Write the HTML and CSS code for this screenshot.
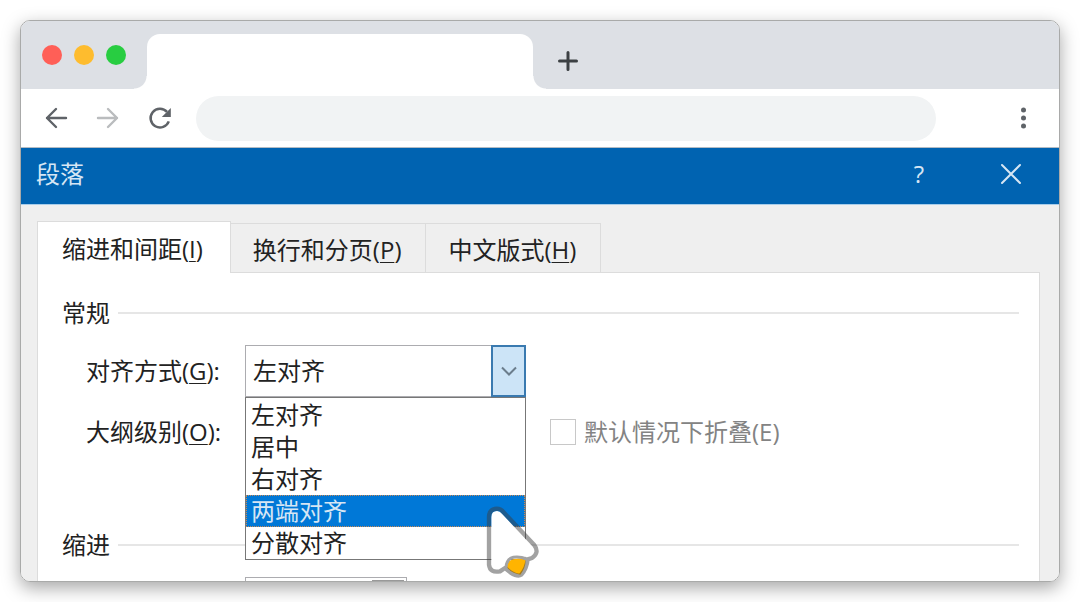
FILE: index.html
```html
<!DOCTYPE html>
<html lang="zh-CN">
<head>
    <meta charset="UTF-8">
    <meta name="viewport" content="width=device-width, initial-scale=1.0">
    <title>段落</title>
    <link rel="stylesheet" href="styles.css">
</head>
<body>

    <div class="window">

        <!-- Browser tabs -->
        <div class="tab-strip">
            <div class="lights">
                <span class="light red"></span>
                <span class="light yellow"></span>
                <span class="light green"></span>
            </div>
            <div class="browser-tab"></div>
            <button class="new-tab" type="button">
                <svg width="32" height="32" viewBox="0 0 32 32"><path d="M16 7.5v17M7.5 16h17" stroke="#3c4043" stroke-width="3" stroke-linecap="round"/></svg>
            </button>
        </div>

        <!-- Browser toolbar -->
        <div class="toolbar">
            <button type="button">
                <svg width="32" height="32" viewBox="0 0 32 32" fill="none" stroke="#5f6368" stroke-width="2.4" stroke-linecap="round" stroke-linejoin="round"><path d="M26 16H7M16 7L7 16l9 9"/></svg>
            </button>
            <button type="button">
                <svg width="32" height="32" viewBox="0 0 32 32" fill="none" stroke="#babcbe" stroke-width="2.4" stroke-linecap="round" stroke-linejoin="round"><path d="M6 16h19M16 7l9 9-9 9"/></svg>
            </button>
            <button type="button">
                <svg width="32" height="32" viewBox="0 0 32 32"><path d="M24.8 19.4A9.4 9.4 0 1 1 23 9.8" fill="none" stroke="#5f6368" stroke-width="2.5"/><path d="M26.8 6v9h-9z" fill="#5f6368"/></svg>
            </button>
            <input class="address" type="text">
            <button type="button">
                <svg width="32" height="32" viewBox="0 0 32 32" fill="#5f6368"><circle cx="16.5" cy="8" r="2.5"/><circle cx="16.5" cy="16" r="2.5"/><circle cx="16.5" cy="24" r="2.5"/></svg>
            </button>
        </div>

        <!-- Dialog title -->
        <div class="title-bar">
            <span class="title">段落</span>
            <button class="help" type="button">?</button>
            <button class="close" type="button">
                <svg width="32" height="32" viewBox="0 0 32 32"><path d="M7 7l18 18M25 7L7 25" stroke="#d6e6f4" stroke-width="2" stroke-linecap="round"/></svg>
            </button>
        </div>

        <!-- Dialog content -->
        <div class="dialog">
            <div class="tabs" role="tablist">
                <button class="tab active" type="button" role="tab">缩进和间距(<u>I</u>)</button>
                <button class="tab" type="button" role="tab">换行和分页(<u>P</u>)</button>
                <button class="tab" type="button" role="tab">中文版式(<u>H</u>)</button>
            </div>

            <div class="panel">
                <div class="heading">常规</div>

                <div class="row">
                    <label for="align">对齐方式(<u>G</u>):</label>
                    <div class="combo">
                        <select id="align">
                            <option>左对齐</option>
                        </select>
                        <span class="arrow">
                            <svg width="16" height="16" viewBox="0 0 16 16"><path d="M1 4.5l7 7 7-7" fill="none" stroke="#6b7d8c" stroke-width="2"/></svg>
                        </span>
                        <ul class="list" role="listbox">
                            <li role="option">左对齐</li>
                            <li role="option">居中</li>
                            <li role="option">右对齐</li>
                            <li class="selected" role="option">两端对齐</li>
                            <li role="option">分散对齐</li>
                        </ul>
                        <svg class="cursor" width="60" height="78" viewBox="372 312 180 234">
                            <path d="M394 352Q394 333 411 333Q420 333 426 341L518 440Q532 460 510 469L500 472Q470 460 448 475Q438 490 434 501L419 513Q396 516 394 494Z" fill="#fff"/>
                            <path d="M445 484Q470 470 497 480Q497 504 481 524Q452 520 440 500Z" fill="#ffb400"/>
                            <path d="M387 350Q388 327 411 326Q423 326 430 336L522 434Q540 458 516 474L503 478Q500 506 484 524Q474 532 452 518L435 504L420 514Q390 520 387 494Z" fill="none" stroke="#3c3c3c" stroke-opacity=".48" stroke-width="13" stroke-linejoin="round"/>
                            <path d="M438 502Q440 476 460 472Q480 469 500 477" fill="none" stroke="#a3a3a3" stroke-width="9"/>
                        </svg>
                    </div>
                </div>

                <div class="row">
                    <label for="outline">大纲级别(<u>O</u>):</label>
                    <div class="combo back">
                        <select id="outline"></select>
                    </div>
                    <label class="check" for="collapse">
                        <input id="collapse" type="checkbox" disabled>
                        默认情况下折叠(E)
                    </label>
                </div>

                <div class="heading indent">缩进</div>

                <div class="row">
                    <div class="spinner">
                        <input type="text">
                        <button type="button"></button>
                    </div>
                </div>
            </div>
        </div>
    </div>

</body>
</html>
```
FILE: styles.css
```css
* {
    box-sizing: border-box;
}

body {
    margin: 0;
    padding: 20px;
    background-color: #fff;
    color: #222;
    font-family: "Open Sans", "Noto Sans CJK SC", sans-serif;
    font-size: 24px;
    line-height: 32px;
}

button,
input,
select {
    margin: 0;
    padding: 0;
    border: none;
    border-radius: 0;
    background: none;
    color: inherit;
    font: inherit;
}

svg {
    display: block;
}

u {
    text-decoration-thickness: 1px;
    text-underline-offset: 3px;
}

.window {
    height: calc(100vh - 40px);
    overflow: hidden;
    border: 1px solid #a9aaa9;
    border-radius: 10px;
    box-shadow: 0 6px 18px rgba(0, 0, 0, 0.35);
}

/* Browser tabs */
.tab-strip {
    display: flex;
    align-items: center;
    height: 68px;
    background-color: #dde0e5;
}

.lights {
    display: flex;
    gap: 12px;
    width: 126px;
    padding-left: 21px;
}

.light {
    width: 20px;
    height: 20px;
    border-radius: 50%;
}

.red {
    background-color: #ff5f57;
}

.yellow {
    background-color: #febc2e;
}

.green {
    background-color: #28cd41;
}

.browser-tab {
    position: relative;
    align-self: flex-end;
    width: 386px;
    height: 55px;
    border-radius: 13px 13px 0 0;
    background-color: #fff;
}

.browser-tab::before,
.browser-tab::after {
    content: "";
    position: absolute;
    bottom: 0;
    width: 13px;
    height: 13px;
}

.browser-tab::before {
    right: 100%;
    background: radial-gradient(circle at 0 0, transparent 12px, #fff 13px);
}

.browser-tab::after {
    left: 100%;
    background: radial-gradient(circle at 100% 0, transparent 12px, #fff 13px);
}

.new-tab {
    margin: 12px 0 0 19px;
}

.lights,
.browser-tab {
    flex-shrink: 0;
}

/* Browser toolbar */
.toolbar {
    display: flex;
    align-items: center;
    gap: 20px;
    height: 59px;
    padding: 0 20px 0 19px;
    border-bottom: 1px solid #b4bcc4;
    background-color: #fff;
}

.address {
    flex: 1;
    min-width: 0;
    height: 45px;
    margin-right: 51px;
    padding: 0 22px;
    border-radius: 23px;
    background-color: #f1f3f4;
}

/* Dialog title */
.title-bar {
    display: flex;
    align-items: center;
    height: 57px;
    padding: 0 32px 4px 15px;
    border-bottom: 1px solid #a8cdea;
    background-color: #0063b1;
    color: #d6e6f4;
}

.title {
    flex: 1;
}

.help {
    width: 32px;
    margin-right: 60px;
}

/* Dialog tabs */
.dialog {
    min-height: 100%;
    padding: 16px 19px 0 16px;
    background-color: #efefef;
}

.tabs {
    display: flex;
    align-items: flex-end;
}

.tab {
    height: 49px;
    padding: 4px 24px 0 22px;
    border: 1px solid #dcdcdc;
    border-left: none;
    border-bottom: none;
}

.tab.active {
    position: relative;
    height: 52px;
    margin-bottom: -1px;
    padding: 2px 27px 0 24px;
    border-left: 1px solid #dcdcdc;
    background-color: #fff;
}

.panel {
    padding: 24px 20px 40px 24px;
    border: 1px solid #dcdcdc;
    background-color: #fff;
}

.heading {
    display: flex;
    align-items: center;
    gap: 8px;
    margin-bottom: 16px;
}

.heading::after {
    content: "";
    flex: 1;
    height: 2px;
    background-color: #e6e6e6;
}

.indent {
    margin-top: 71px;
}

.row {
    display: grid;
    grid-template-columns: 159px 281px 1fr;
    align-items: center;
    padding-left: 24px;
}

.row + .row {
    margin-top: 9px;
}

/* Drop-down */
.combo {
    position: relative;
    z-index: 1;
    height: 52px;
}

.combo.back {
    z-index: 0;
}

.combo select {
    width: 100%;
    height: 100%;
    padding-left: 7px;
    border: 1px solid #acacb0;
    background-color: #fff;
    appearance: none;
}

.arrow {
    position: absolute;
    top: 0;
    right: 0;
    display: flex;
    align-items: center;
    justify-content: center;
    width: 35px;
    height: 52px;
    border: 2px solid #3a7ab0;
    background-color: #cce4f7;
    pointer-events: none;
}

.list {
    position: absolute;
    top: 100%;
    left: 0;
    width: 100%;
    margin: 0;
    padding: 1px 0 0;
    border: 1px solid #777;
    background-color: #fff;
    list-style: none;
}

.list li {
    padding-left: 5px;
}

.list .selected {
    outline: 1px dotted #c98a55;
    outline-offset: -1px;
    background-color: #0078d7;
    color: #d6e6f4;
}

.cursor {
    position: absolute;
    top: 159px;
    left: 239px;
}

.check {
    display: flex;
    align-items: center;
    gap: 8px;
    padding-left: 24px;
    color: #838383;
}

.check input {
    width: 26px;
    height: 26px;
    border: 1px solid #c8c8c8;
    background-color: #fff;
    appearance: none;
}

.spinner {
    display: flex;
    grid-column: 2;
    width: 162px;
    height: 52px;
    padding: 2px;
    border: 1px solid #acacb0;
}

.spinner input {
    flex: 1;
    min-width: 0;
}

.spinner button {
    width: 32px;
    border: 1px solid #999;
    background-color: #efefef;
}
```
